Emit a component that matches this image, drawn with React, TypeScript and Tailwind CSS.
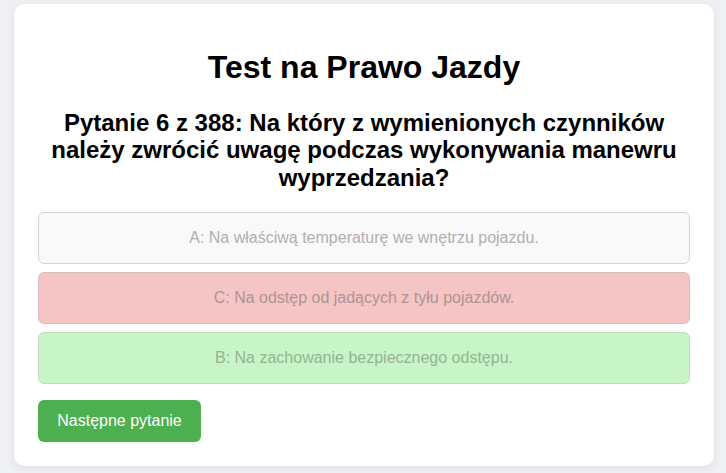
import React from "react";

export default function App() {
  const options = [
    { label: "A: Na właściwą temperaturę we wnętrzu pojazdu.", cls: "bg-[#f9f9f9] text-[#b0b0b0] border-[#d4d4d4]" },
    { label: "C: Na odstęp od jadących z tyłu pojazdów.", cls: "bg-[#f5c4c4] text-[#b09494] border-[#d6c0c0]" },
    { label: "B: Na zachowanie bezpiecznego odstępu.", cls: "bg-[#c8f5c6] text-[#94b494] border-[#c4d8c2]" },
  ];
  return (
    <div className="min-h-[473px] bg-[#eef0f4] pt-[4px] pb-[7px]" style={{ fontFamily: '"Liberation Sans", Arial, sans-serif' }}>
      <div className="ml-[14px] w-[700px] bg-white rounded-[10px] shadow-[0_2px_8px_rgba(0,0,0,0.08)] p-6 text-black">
        <h1 className="text-[32px] font-bold text-center leading-[1.15] mt-[21px] mb-[21px]">Test na Prawo Jazdy</h1>
        <h2 className="text-[24px] font-bold text-center leading-[1.15] mt-[23px] mb-[20px] px-2">
          Pytanie 6 z 388: Na który z wymienionych czynników należy zwrócić uwagę podczas wykonywania manewru wyprzedzania?
        </h2>
        <div className="flex flex-col gap-[8px]">
          {options.map((o) => (
            <div key={o.label} className={`h-[52px] flex items-center justify-center border rounded-[6px] text-[16px] ${o.cls}`}>
              {o.label}
            </div>
          ))}
        </div>
        <button className="mt-[16px] h-[42px] w-[163px] bg-[#4caf50] text-white text-[16px] rounded-[6px]">Następne pytanie</button>
      </div>
    </div>
  );
}
